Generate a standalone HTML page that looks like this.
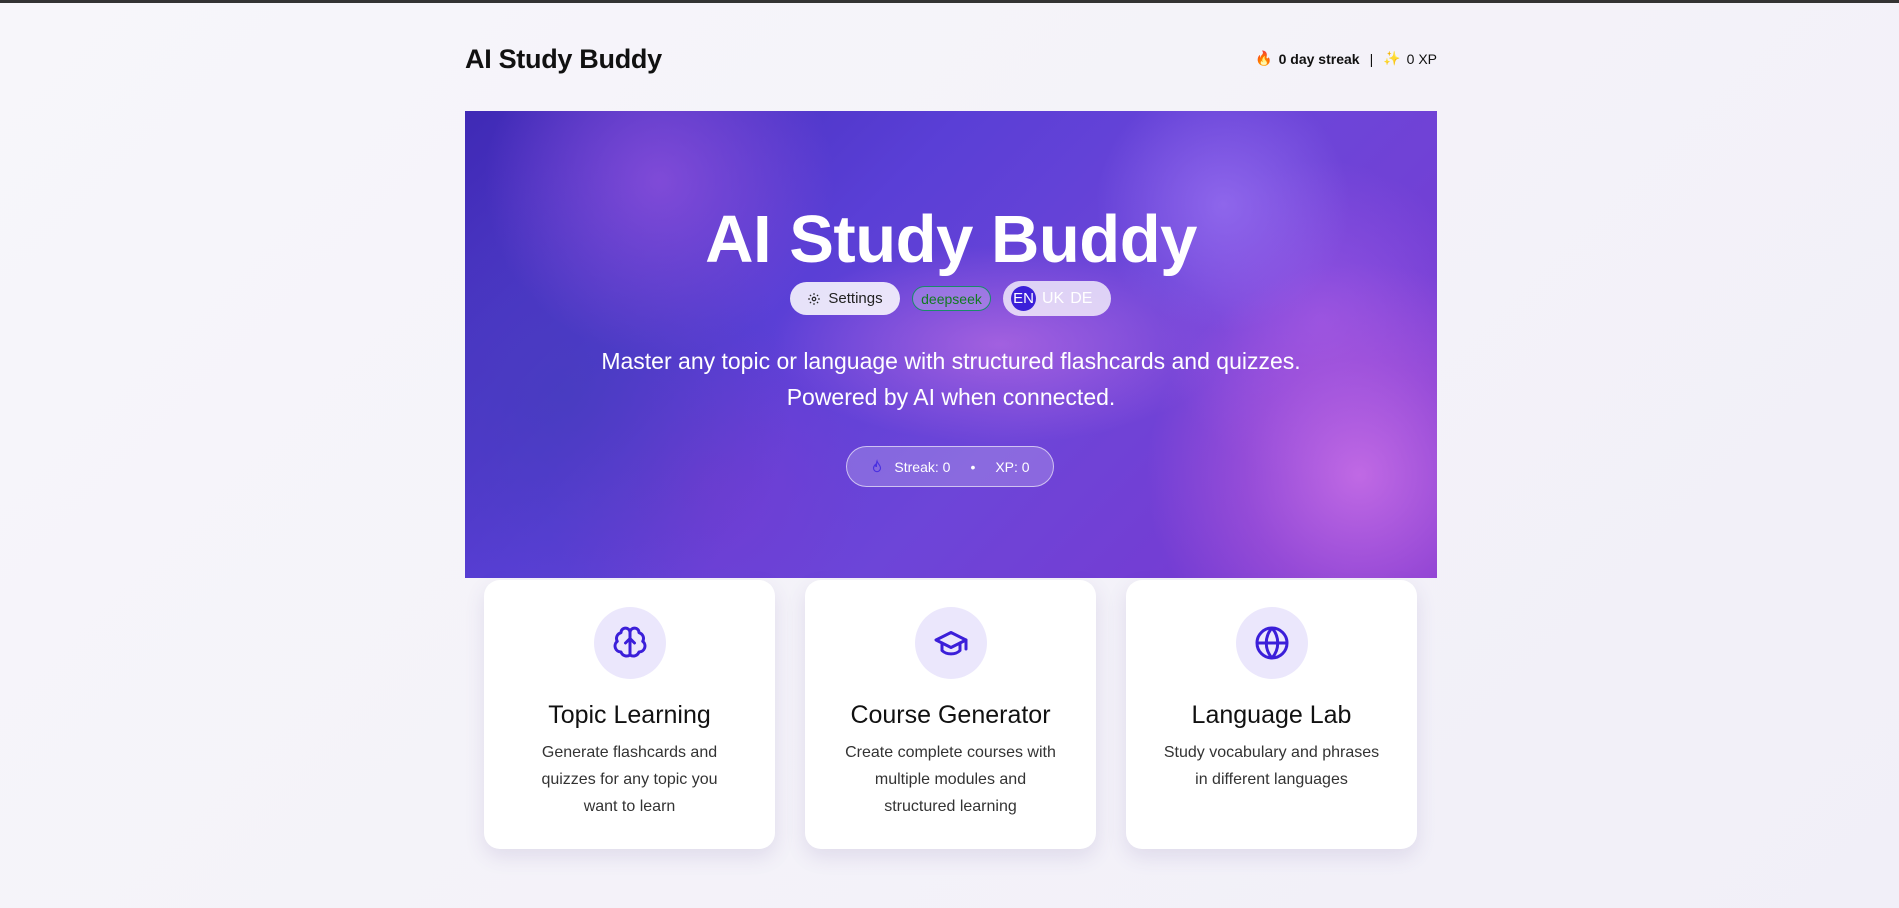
<!DOCTYPE html>
<html><head><meta charset="utf-8"><style>
*{box-sizing:border-box;margin:0;padding:0}
body{width:1899px;height:908px;overflow:hidden;background:linear-gradient(135deg,#f7f6fa,#f1eff8);font-family:"Liberation Sans",sans-serif;color:#111;position:relative;border-top:3px solid #333}
.hdr-t{position:absolute;left:465px;top:41px;font-size:27px;font-weight:bold;letter-spacing:-0.3px}
.hdr-r{position:absolute;right:462px;top:47px;font-size:14px;display:flex;align-items:center;gap:6px}
.hero{position:absolute;left:465px;top:108px;width:972px;height:467px;overflow:hidden;
background:
radial-gradient(circle at 92% 78%,rgba(200,110,230,.9) 0,rgba(180,90,220,.5) 12%,transparent 22%),
radial-gradient(circle at 78% 20%,rgba(150,110,240,.8) 0,transparent 15%),
radial-gradient(circle at 88% 45%,rgba(160,90,230,.7) 0,transparent 18%),
radial-gradient(circle at 20% 15%,rgba(140,80,220,.8) 0,transparent 20%),
radial-gradient(circle at 10% 60%,rgba(70,60,190,.8) 0,transparent 25%),
radial-gradient(ellipse at 55% 50%,rgba(210,120,230,.55) 0,transparent 30%),
radial-gradient(circle at 25% 80%,rgba(120,60,210,.7) 0,transparent 20%),
linear-gradient(135deg,#3f2ab5 0%,#5a3fd6 35%,#6d45d8 60%,#7a36cf 100%)}
.hero h1{position:absolute;left:0;right:0;top:90px;text-align:center;color:#fff;font-size:67px;font-weight:bold;letter-spacing:-0.5px}
.btns{position:absolute;left:325px;top:170px;display:flex;gap:12px;align-items:center}
.set{height:33px;width:110px;border-radius:17px;background:rgba(255,255,255,.85);display:flex;align-items:center;justify-content:center;gap:7px;font-size:15px;color:#222}
.ds{height:25px;width:79px;border-radius:13px;border:1px solid #1a8a6a;background:rgba(200,180,240,.4);color:#127a20;font-size:14px;display:flex;align-items:center;justify-content:center}
.lang{height:35px;width:108px;border-radius:18px;background:rgba(255,255,255,.75);display:flex;align-items:center;padding-left:8px;gap:6px;color:#fff;font-size:16px}
.lang b{width:25px;height:25px;border-radius:50%;background:#3b1fd9;font-weight:normal;display:flex;align-items:center;justify-content:center;font-size:15px}
.sub{position:absolute;left:0;right:0;top:232px;text-align:center;color:#fff;font-size:23px;line-height:36px}
.pill{position:absolute;left:381px;top:335px;width:208px;height:41px;border-radius:21px;border:1px solid rgba(255,255,255,.6);background:rgba(255,255,255,.2);color:#fff;font-size:14px;display:flex;align-items:center;justify-content:center;gap:10px}
.card{position:absolute;top:577px;width:291px;height:269px;background:#fff;border-radius:16px;box-shadow:0 8px 20px rgba(80,60,140,.12);text-align:center}
.ic{width:72px;height:72px;border-radius:50%;background:#ebe7fc;margin:27px auto 0;display:flex;align-items:center;justify-content:center}
.card h3{font-size:25px;font-weight:normal;margin-top:22px;color:#111}
.card p{font-size:16px;line-height:27px;color:#333;margin:9px 40px 0}
</style></head><body>
<div class="hdr-t">AI Study Buddy</div>
<div class="hdr-r"><span>🔥</span><b>0 day streak</b><span style="margin:0 4px">|</span><span>✨</span><span>0 XP</span></div>
<div class="hero">
<h1>AI Study Buddy</h1>
<div class="btns">
<div class="set"><svg width="14" height="14" viewBox="0 0 24 24" fill="none" stroke="#222" stroke-width="2"><circle cx="12" cy="12" r="3"/><path d="M12 2v3M12 19v3M2 12h3M19 12h3M4.9 4.9l2.1 2.1M17 17l2.1 2.1M4.9 19.1L7 17M17 7l2.1-2.1"/></svg>Settings</div>
<div class="ds">deepseek</div>
<div class="lang"><b>EN</b><span>UK</span><span>DE</span></div>
</div>
<div class="sub">Master any topic or language with structured flashcards and quizzes.<br>Powered by AI when connected.</div>
<div class="pill"><svg width="14" height="16" viewBox="0 0 24 24" fill="none" stroke="#4a30e0" stroke-width="2"><path d="M12 2c1 4 6 7 6 12a6 6 0 0 1-12 0c0-3 2-5 3-6 0 2 1 3 2 3 0-3 0-6 1-9z"/></svg>Streak: 0<span style="margin:0 10px">•</span>XP: 0</div>
</div>
<div class="card" style="left:484px"><div class="ic"><svg width="36" height="36" viewBox="0 0 24 24" fill="none" stroke="#3b1fd9" stroke-width="2" stroke-linecap="round" stroke-linejoin="round"><path d="M12 5a3 3 0 1 0-6 .1 4 4 0 0 0-2.5 5.8A4 4 0 0 0 6 18a4 4 0 0 0 6 2z"/><path d="M12 5a3 3 0 1 1 6 .1 4 4 0 0 1 2.5 5.8A4 4 0 0 1 18 18a4 4 0 0 1-6 2z"/><path d="M12 20V9M9 12l3-3 3 3"/></svg></div><h3>Topic Learning</h3><p>Generate flashcards and quizzes for any topic you want to learn</p></div>
<div class="card" style="left:805px"><div class="ic"><svg width="36" height="36" viewBox="0 0 24 24" fill="none" stroke="#3b1fd9" stroke-width="2" stroke-linecap="round" stroke-linejoin="round"><path d="M22 10L12 5 2 10l10 5 10-5z"/><path d="M6 12v5c3 3 9 3 12 0v-5"/><path d="M22 10v6"/></svg></div><h3>Course Generator</h3><p>Create complete courses with multiple modules and structured learning</p></div>
<div class="card" style="left:1126px"><div class="ic"><svg width="36" height="36" viewBox="0 0 24 24" fill="none" stroke="#3b1fd9" stroke-width="2"><circle cx="12" cy="12" r="10"/><path d="M2 12h20M12 2a15 15 0 0 1 0 20M12 2a15 15 0 0 0 0 20"/></svg></div><h3>Language Lab</h3><p style="margin:9px 20px 0">Study vocabulary and phrases<br>in different languages</p></div>
</body></html>
